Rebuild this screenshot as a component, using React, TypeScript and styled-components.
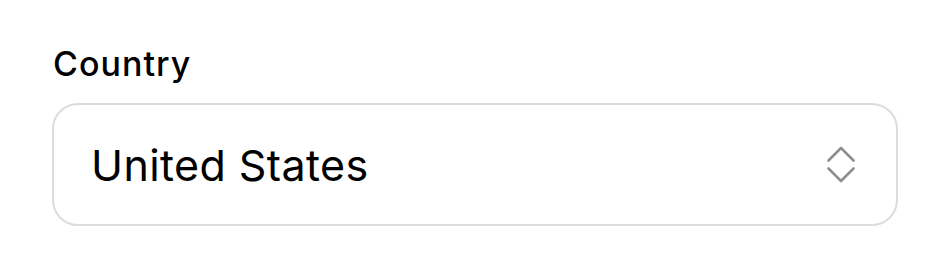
import React from "react";
import styled, { createGlobalStyle } from "styled-components";

const Global = createGlobalStyle`
  html, body { margin: 0; padding: 0; background: #ffffff; }
  body { font-family: Inter, "Noto Sans", sans-serif; color: #000; }
`;

const Page = styled.div`
  width: 950px;
  height: 279px;
  box-sizing: border-box;
  padding: 44px 52px 0 52px;
  display: flex;
  flex-direction: column;
  gap: 19px;
`;

const Label = styled.label`
  font-size: 34px;
  line-height: 40px;
  font-weight: 500;
  letter-spacing: 1px;
  padding-left: 1px;
  color: #000;
`;

const SelectBox = styled.div`
  box-sizing: border-box;
  height: 123px;
  border: 2px solid #dcdcdc;
  border-radius: 26px;
  display: flex;
  align-items: center;
  justify-content: space-between;
  padding: 0 41px 0 37px;
  background: #fff;
`;

const Value = styled.span`
  font-size: 43px;
  font-weight: 400;
  letter-spacing: 0.4px;
  color: #000;
`;

const Chevrons = () => (
  <svg width="28" height="37" viewBox="0 0 28 37" fill="none">
    <path d="M1.5 14.5 L14 2 L26.5 14.5" stroke="#8e8e8e" strokeWidth="2.6" strokeLinecap="round" strokeLinejoin="round" />
    <path d="M1.5 22.5 L14 35 L26.5 22.5" stroke="#8e8e8e" strokeWidth="2.6" strokeLinecap="round" strokeLinejoin="round" />
  </svg>
);

export default function App() {
  return (
    <>
      <Global />
      <Page>
        <Label>Country</Label>
        <SelectBox>
          <Value>United States</Value>
          <Chevrons />
        </SelectBox>
      </Page>
    </>
  );
}
